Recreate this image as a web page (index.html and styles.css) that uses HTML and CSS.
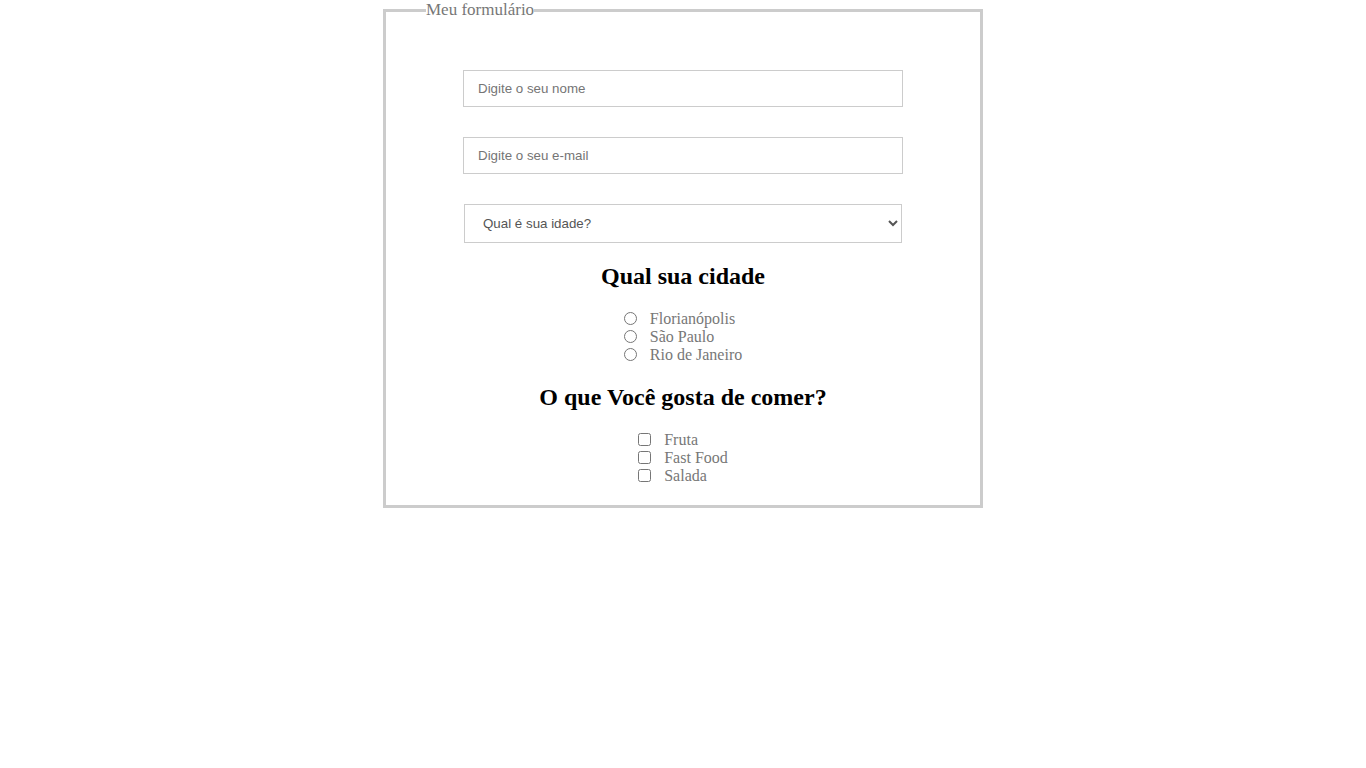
FILE: index.html
```html
<!DOCTYPE html>
<html lang="pt-BR">
<head>
<meta charset="utf-8">
<title>Meu formulário</title>
<link rel="stylesheet" href="styles.css">
</head>
<body>
<form class="form">
  <fieldset class="form-box">
    <legend class="form-legend">Meu formulário</legend>
    <div class="fields">
      <input class="text-input" type="text" placeholder="Digite o seu nome">
      <input class="text-input" type="email" placeholder="Digite o seu e-mail">
      <select class="select-input">
        <option>Qual é sua idade?</option>
        <option>Menos de 18</option>
        <option>18 a 30</option>
        <option>Mais de 30</option>
      </select>
    </div>
    <h2 class="question">Qual sua cidade</h2>
    <div class="group">
      <div class="options">
        <label class="option"><input class="radio" type="radio" name="cidade"><span>Florianópolis</span></label>
        <label class="option"><input class="radio" type="radio" name="cidade"><span>São Paulo</span></label>
        <label class="option"><input class="radio" type="radio" name="cidade"><span>Rio de Janeiro</span></label>
      </div>
    </div>
    <h2 class="question">O que Você gosta de comer?</h2>
    <div class="group">
      <div class="options">
        <label class="option"><input class="check" type="checkbox"><span>Fruta</span></label>
        <label class="option"><input class="check" type="checkbox"><span>Fast Food</span></label>
        <label class="option"><input class="check" type="checkbox"><span>Salada</span></label>
      </div>
    </div>
  </fieldset>
</form>
</body>
</html>
```

FILE: styles.css
```css
html, body {
  margin: 0;
  padding: 0;
  background: #fff;
}

body {
  font-family: "Liberation Serif", "Times New Roman", serif;
  font-size: 16px;
}

.form {
  margin: 0;
  padding-top: 1px;
}

.form-box {
  box-sizing: border-box;
  width: 600px;
  margin: 0 auto;
  border: 3px solid #cccccc;
  padding: 0 40px 20px;
}

.form-legend {
  padding: 0;
  color: #777777;
  font-size: 17px;
  line-height: 18px;
}

.fields {
  display: flex;
  flex-direction: column;
  align-items: center;
  gap: 30px;
  padding-top: 51px;
}

.text-input {
  box-sizing: border-box;
  width: 440px;
  height: 37px;
  margin: 0;
  border: 1px solid #cccccc;
  padding: 0 14px;
  font-family: "Liberation Sans", Arial, sans-serif;
  font-size: 13.33px;
  color: #333;
  background: #fff;
  outline: none;
}

.text-input::placeholder {
  color: #757575;
}

.select-input {
  box-sizing: border-box;
  width: 438px;
  height: 39px;
  margin: 0;
  border: 1px solid #cccccc;
  padding: 0 0 0 14px;
  font-family: "Liberation Sans", Arial, sans-serif;
  font-size: 13.33px;
  color: #555555;
  background: #fff;
  border-radius: 0;
}

.question {
  margin: 19px 0 20px;
  text-align: center;
  font-size: 24px;
  line-height: 28px;
  font-weight: bold;
  color: #000;
}

.group {
  text-align: center;
}

.options {
  display: inline-flex;
  flex-direction: column;
  text-align: left;
}

.option {
  display: flex;
  align-items: center;
  gap: 13px;
  height: 18px;
  line-height: 18px;
  color: #777777;
  font-size: 16px;
}

.radio,
.check {
  width: 13px;
  height: 13px;
  margin: -2px 0 0 0;
}
```
